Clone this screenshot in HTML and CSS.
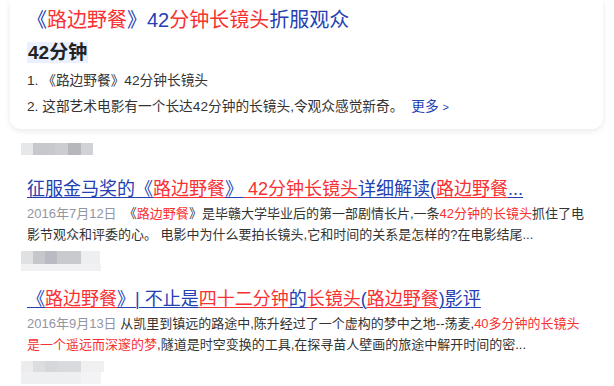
FILE: index.html
```html
<!DOCTYPE html>
<html lang="zh-CN">
<head>
<meta charset="utf-8">
<link rel="stylesheet" href="styles.css">
</head>
<body>
<div class="page">
  <div class="card">
    <a class="title t-main"><span class="b">《</span><em>路边野餐</em><span class="b">》42</span><em>分钟长镜头</em><span class="b">折服观众</span></a>
    <div class="answer"><span class="hl">42分钟</span></div>
    <ol class="steps">
      <li>1. 《路边野餐》42分钟长镜头</li>
      <li>2. 这部艺术电影有一个长达42分钟的长镜头,令观众感觉新奇。 <a class="more">更多 <span class="arrow">&gt;</span></a></li>
    </ol>
  </div>

  <div class="src src1"></div>

  <div class="result">
    <a class="title ul"><span class="b">征服金马奖的《</span><em>路边野餐</em><span class="b">》</span><em> 42分钟长镜头</em><span class="b">详细解读(</span><em>路边野餐</em><span class="b">...</span></a>
    <p class="snippet"><span class="date">2016年7月12日</span>&nbsp; 《<em>路边野餐</em>》是毕赣大学毕业后的第一部剧情长片,一条<em>42分钟的长镜头</em>抓住了电影节观众和评委的心。 电影中为什么要拍长镜头,它和时间的关系是怎样的?在电影结尾...</p>
  </div>

  <div class="src src2"><div class="src-row"></div></div>

  <div class="result r3">
    <a class="title ul"><span class="b">《</span><em>路边野餐</em><span class="b">》| 不止是</span><em>四十二分钟</em><span class="b">的</span><em>长镜头</em><span class="b">(</span><em>路边野餐</em><span class="b">)影评</span></a>
    <p class="snippet"><span class="date">2016年9月13日</span> 从凯里到镇远的路途中,陈升经过了一个虚构的梦中之地--荡麦,<em>40多分钟的长镜头是一个遥远而深邃的梦</em>,隧道是时空变换的工具,在探寻苗人壁画的旅途中解开时间的密...</p>
  </div>

  <div class="src src3"><div class="src-row"></div></div>
</div>
</body>
</html>
```

FILE: styles.css
```css
* { box-sizing: border-box; }
html, body { margin: 0; padding: 0; background: #fff; }
body {
  width: 614px;
  height: 386px;
  overflow: hidden;
  font-family: "Liberation Sans", Arial, "Noto Sans CJK SC", sans-serif;
  color: #333;
}
em { font-style: normal; color: #f73131; }
.b { color: #2440b3; }

.page { display: flex; flex-direction: column; }

.card {
  margin: 0 11px 0 10px;
  padding: 8px 17px 9px 17px;
  background: #fff;
  border-radius: 0 0 11px 11px;
  box-shadow: 0 2px 6px rgba(0, 0, 0, 0.09);
}

.title {
  display: block;
  font-size: 18px;
  line-height: 24px;
  white-space: nowrap;
  cursor: pointer;
}
.t-main { font-size: 20px; }
.ul, .ul span, .ul em { text-decoration: underline; text-underline-offset: 2px; text-decoration-thickness: 1px; }

.answer { margin-top: 10px; line-height: 22px; }
.hl {
  font-size: 19px;
  font-weight: bold;
  color: #222;
  background: #eaf0fd;
  padding: 0 1px;
}

.steps { list-style: none; margin: 3px 0 0; padding: 0; }
.steps li { font-size: 13.7px; line-height: 26px; color: #333; }
.more { color: #2440b3; margin-left: 4px; }
.arrow { font-size: 11px; }

.src {
  margin-left: 21px;
  height: 12px;
  filter: blur(0.6px);
}
.src1 {
  margin-top: 14px;
  width: 72px;
  background: linear-gradient(to right,
    #e6e7e9 0 12px, #c6c8cb 12px 34px, #cccdd1 34px 47px, #b6b7ba 47px 60px, #d0d2d5 60px 72px);
}
.src2 {
  margin-top: 6px;
  width: 79px;
  height: 13px;
  background: linear-gradient(to right,
    #e0e1e3 0 12px, #c6c7ca 12px 24px, #b9bac4 24px 36px, #c9cacd 36px 60px, #eeeff0 60px 79px);
}
.src3 {
  margin-top: 6px;
  width: 83px;
  height: 11px;
  background: linear-gradient(to right,
    #ececee 0 12px, #dcdde0 12px 24px, #d6d7db 24px 36px, #d9dadd 36px 60px, #f0f0f1 60px 83px);
}
.src-row {
  margin-top: 13px;
  height: 8px;
  width: 80px;
  background: #f1f1f3;
}
.src2 .src-row { margin-top: 13px; height: 7px; }
.src3 .src-row { margin-top: 11px; height: 12px; background: linear-gradient(to right, #eeeff1 0 60px, #f3f3f5 60px 80px); }

.result { margin: 22px 24px 0 27px; }
.r3 { margin-top: 23px; }
.snippet {
  margin: 2px 0 0;
  font-size: 13px;
  line-height: 21px;
  color: #333;
}
.date { color: #9195a3; }
```
